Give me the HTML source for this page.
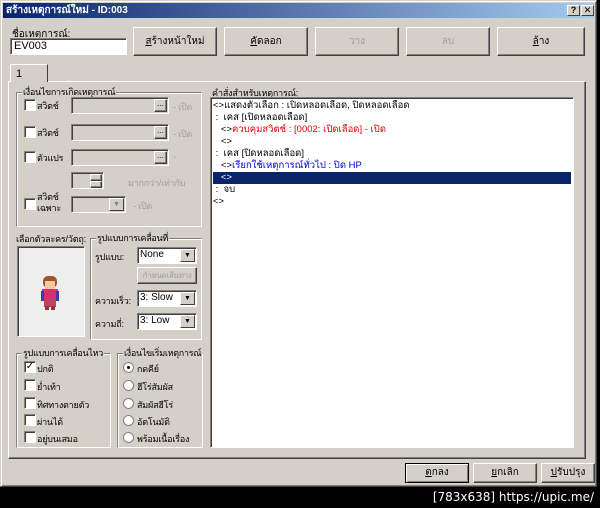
<!DOCTYPE html>
<html><head><meta charset="utf-8"><style>
*{box-sizing:border-box;margin:0;padding:0}
body{width:600px;height:508px;background:#000;position:relative;overflow:hidden;font-family:"Liberation Sans","DejaVu Sans",sans-serif;font-size:10px;color:#000}
.a{position:absolute;white-space:nowrap}
.win{left:0;top:0;width:597px;height:487px;background:#d4d0c8;border:1px solid;border-color:#d4d0c8 #404040 #404040 #d4d0c8;box-shadow:inset 1px 1px 0 #fff,inset -1px -1px 0 #808080}
.title{left:3px;top:3px;width:591px;height:15px;background:linear-gradient(90deg,#0a246a,#a6caf0);color:#fff;font-weight:bold;font-size:10px;line-height:15px;padding-left:3px}
.tb{top:5px;width:13px;height:11px;background:#d4d0c8;border:1px solid;border-color:#fff #404040 #404040 #fff;font-size:9px;font-weight:bold;text-align:center;line-height:9px;color:#000}
.btn{background:#d4d0c8;border:1px solid;border-color:#fff #404040 #404040 #fff;box-shadow:inset -1px -1px 0 #808080;text-align:center;font-size:10px}
.dis{color:#a0a0a0}
.sunk{background:#fff;border:1px solid;border-color:#808080 #fff #fff #808080;box-shadow:inset 1px 1px 0 #404040}
.sunkg{background:#d4d0c8;border:1px solid;border-color:#808080 #fff #fff #808080;box-shadow:inset 1px 1px 0 #404040}
.grp{border:1px solid;border-color:#808080 #fff #fff #808080;box-shadow:inset 1px 1px 0 #fff,1px 1px 0 #808080 inset}
.grp>span{position:absolute;top:-7px;left:5px;background:#d4d0c8;padding:0 1px;line-height:12px;font-size:9px;letter-spacing:-0.3px}
.cb{width:12px;height:12px;background:#fff;border:1px solid;border-color:#808080 #fff #fff #808080;box-shadow:inset 1px 1px 0 #404040}
.rb{width:11px;height:11px;border-radius:50%;background:#fff;border:1px solid #808080}
.dd{width:15px;height:13px;right:1px;top:1px;background:#d4d0c8;border:1px solid;border-color:#fff #404040 #404040 #fff;font-size:7px;text-align:center;line-height:11px}
.lst div{height:12px;line-height:12px;white-space:nowrap}
.s9{font-size:9px;letter-spacing:-0.2px}
</style></head><body>
<div class="a win"></div>
<div class="a title">สร้างเหตุการณ์ใหม่ - ID:003</div>
<div class="a tb" style="left:567px">?</div>
<div class="a tb" style="left:581px">✕</div>

<div class="a" style="left:12px;top:27px">ชื่อเหตุการณ์:</div>
<div class="a sunk" style="left:10px;top:38px;width:117px;height:17px;padding:1px 3px;font-size:11px">EV003</div>
<div class="a btn" style="left:133px;top:27px;width:84px;height:29px;line-height:27px"><u>ส</u>ร้างหน้าใหม่</div>
<div class="a btn" style="left:224px;top:27px;width:84px;height:29px;line-height:27px"><u>คั</u>ดลอก</div>
<div class="a btn dis" style="left:315px;top:27px;width:84px;height:29px;line-height:27px">วาง</div>
<div class="a btn dis" style="left:406px;top:27px;width:84px;height:29px;line-height:27px">ลบ</div>
<div class="a btn" style="left:497px;top:27px;width:88px;height:29px;line-height:27px"><u>ล้</u>าง</div>

<div class="a" style="left:8px;top:81px;width:578px;height:378px;border:1px solid;border-color:#fff #404040 #404040 #fff;box-shadow:inset -1px -1px 0 #808080"></div>
<div class="a" style="left:10px;top:64px;width:38px;height:18px;background:#d4d0c8;border:1px solid;border-bottom:none;border-color:#fff #404040 #404040 #fff;padding:3px 5px;font-size:11px">1</div>

<div class="a grp" style="left:16px;top:92px;width:186px;height:135px"><span>เงื่อนไขการเกิดเหตุการณ์</span></div>
<div class="a cb" style="left:24px;top:99px"></div><div class="a s9" style="left:37px;top:99px">สวิตช์</div>
<div class="a sunkg" style="left:71px;top:97px;width:98px;height:17px"><div class="a btn" style="right:1px;top:1px;width:13px;height:13px;font-size:8px;line-height:8px">...</div></div>
<div class="a dis s9" style="left:173px;top:100px">- เปิด</div>
<div class="a cb" style="left:24px;top:126px"></div><div class="a s9" style="left:37px;top:126px">สวิตช์</div>
<div class="a sunkg" style="left:71px;top:124px;width:98px;height:17px"><div class="a btn" style="right:1px;top:1px;width:13px;height:13px;font-size:8px;line-height:8px">...</div></div>
<div class="a dis s9" style="left:173px;top:127px">- เปิด</div>
<div class="a cb" style="left:24px;top:151px"></div><div class="a s9" style="left:37px;top:151px">ตัวแปร</div>
<div class="a sunkg" style="left:71px;top:149px;width:98px;height:17px"><div class="a btn" style="right:1px;top:1px;width:13px;height:13px;font-size:8px;line-height:8px">...</div></div>
<div class="a dis" style="left:173px;top:152px">-</div>
<div class="a sunkg" style="left:71px;top:172px;width:33px;height:17px"><div class="a btn" style="right:1px;top:1px;width:12px;height:7px"></div><div class="a btn" style="right:1px;top:8px;width:12px;height:7px"></div></div>
<div class="a dis s9" style="left:128px;top:176px">มากกว่า/เท่ากับ</div>
<div class="a cb" style="left:24px;top:198px"></div><div class="a s9" style="left:37px;top:192px;line-height:11px">สวิตช์<br>เฉพาะ</div>
<div class="a sunkg" style="left:71px;top:196px;width:55px;height:17px"><div class="a dd" style="color:#808080">▼</div></div>
<div class="a dis s9" style="left:133px;top:199px">- เปิด</div>

<div class="a s9" style="left:16px;top:232px">เลือกตัวละคร/วัตถุ:</div>
<div class="a" style="left:17px;top:246px;width:68px;height:91px;background:#eeeeee;border:1px solid;border-color:#808080 #fff #fff #808080;box-shadow:inset 1px 1px 0 #404040"></div>
<svg class="a" style="left:38px;top:275px" width="24" height="36" viewBox="0 0 24 36">
<rect x="5" y="1" width="14" height="12" rx="5" fill="#a0522d"/><rect x="7" y="6" width="10" height="8" fill="#f5c9a0"/>
<rect x="4" y="14" width="16" height="10" fill="#d8306a"/><rect x="3" y="16" width="3" height="10" fill="#3a3ab0"/><rect x="18" y="16" width="3" height="10" fill="#3a3ab0"/>
<rect x="6" y="24" width="12" height="8" fill="#c0406a"/><rect x="7" y="31" width="4" height="4" fill="#8b3a2a"/><rect x="13" y="31" width="4" height="4" fill="#8b3a2a"/></svg>

<div class="a grp" style="left:90px;top:238px;width:112px;height:102px"><span>รูปแบบการเคลื่อนที่</span></div>
<div class="a s9" style="left:95px;top:250px">รูปแบบ:</div>
<div class="a sunk" style="left:137px;top:247px;width:60px;height:17px;padding:1px 2px;font-size:10px">None<div class="a dd">▼</div></div>
<div class="a btn dis" style="left:137px;top:267px;width:60px;height:17px;line-height:15px;font-size:8px;letter-spacing:-0.3px">กำหนดเส้นทาง</div>
<div class="a s9" style="left:95px;top:294px">ความเร็ว:</div>
<div class="a sunk" style="left:137px;top:290px;width:60px;height:17px;padding:1px 2px;font-size:10px">3: Slow<div class="a dd">▼</div></div>
<div class="a s9" style="left:95px;top:317px">ความถี่:</div>
<div class="a sunk" style="left:137px;top:313px;width:60px;height:17px;padding:1px 2px;font-size:10px">3: Low<div class="a dd">▼</div></div>

<div class="a grp" style="left:16px;top:353px;width:95px;height:95px"><span>รูปแบบการเคลื่อนไหว</span></div>
<div class="a cb" style="left:24px;top:361px;font-size:10px;line-height:9px;text-align:center">✓</div><div class="a s9" style="left:37px;top:362px">ปกติ</div>
<div class="a cb" style="left:24px;top:379px"></div><div class="a s9" style="left:37px;top:380px">ย่ำเท้า</div>
<div class="a cb" style="left:24px;top:397px"></div><div class="a s9" style="left:37px;top:398px">ทิศทางตายตัว</div>
<div class="a cb" style="left:24px;top:414px"></div><div class="a s9" style="left:37px;top:415px">ผ่านได้</div>
<div class="a cb" style="left:24px;top:431px"></div><div class="a s9" style="left:37px;top:432px">อยู่บนเสมอ</div>

<div class="a grp" style="left:117px;top:353px;width:86px;height:95px"><span>เงื่อนไขเริ่มเหตุการณ์</span></div>
<div class="a rb" style="left:123px;top:362px"><div class="a" style="left:3px;top:3px;width:3px;height:3px;background:#000;border-radius:50%"></div></div><div class="a s9" style="left:137px;top:362px">กดคีย์</div>
<div class="a rb" style="left:123px;top:380px"></div><div class="a s9" style="left:137px;top:380px">ฮีโร่สัมผัส</div>
<div class="a rb" style="left:123px;top:398px"></div><div class="a s9" style="left:137px;top:398px">สัมผัสฮีโร่</div>
<div class="a rb" style="left:123px;top:415px"></div><div class="a s9" style="left:137px;top:415px">อัตโนมัติ</div>
<div class="a rb" style="left:123px;top:432px"></div><div class="a s9" style="left:137px;top:432px">พร้อมเนื้อเรื่อง</div>

<div class="a s9" style="left:212px;top:86px">คำสั่งสำหรับเหตุการณ์:</div>
<div class="a sunk lst" style="left:210px;top:97px;width:364px;height:351px;padding:2px 2px;font-size:9.5px">
<div>&lt;&gt;แสดงตัวเลือก : เปิดหลอดเลือด, ปิดหลอดเลือด</div>
<div>&nbsp;: &nbsp;เคส [เปิดหลอดเลือด]</div>
<div style="color:#e00000">&nbsp;&nbsp;&nbsp;<span style="color:#000">&lt;&gt;</span>ควบคุมสวิตช์ : [0002: เปิดเลือด] - เปิด</div>
<div>&nbsp;&nbsp;&nbsp;&lt;&gt;</div>
<div>&nbsp;: &nbsp;เคส [ปิดหลอดเลือด]</div>
<div style="color:#0000d0">&nbsp;&nbsp;&nbsp;<span style="color:#000">&lt;&gt;</span>เรียกใช้เหตุการณ์ทั่วไป : ปิด HP</div>
<div style="background:#0a246a;color:#fff">&nbsp;&nbsp;&nbsp;&lt;&gt;</div>
<div>&nbsp;: &nbsp;จบ</div>
<div>&lt;&gt;</div>
</div>

<div class="a btn" style="left:405px;top:463px;width:64px;height:20px;line-height:18px;border:1px solid #000;box-shadow:inset 1px 1px 0 #fff,inset -1px -1px 0 #808080"><u>ต</u>กลง</div>
<div class="a btn" style="left:473px;top:463px;width:64px;height:20px;line-height:18px"><u>ย</u>กเลิก</div>
<div class="a btn" style="left:541px;top:463px;width:54px;height:20px;line-height:18px"><u>ป</u>รับปรุง</div>

<div class="a" style="right:6px;top:490px;color:#fff;font-size:12px;font-family:'DejaVu Sans',sans-serif">[783x638] https://upic.me/</div>
</body></html>
